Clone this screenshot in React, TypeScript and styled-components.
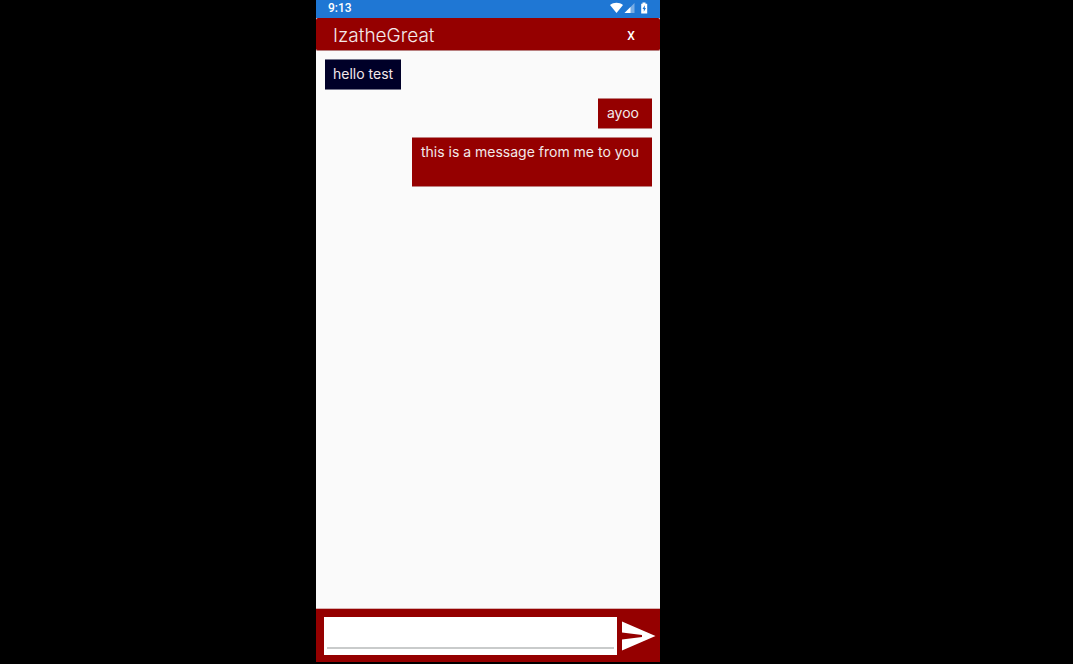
import React from "react";
import styled, { createGlobalStyle } from "styled-components";

const GlobalStyle = createGlobalStyle`
  * { box-sizing: border-box; }
  body { margin: 0; background: #000; }
  button, input { font: inherit; border: 0; padding: 0; margin: 0; border-radius: 0; }
`;

const Stage = styled.div`
  display: grid;
  grid-template-columns: minmax(0, 316fr) minmax(320px, 344fr) minmax(0, 413fr);
  min-height: 100vh;
  padding-bottom: 2px;
  background: #000;
`;

const Phone = styled.main`
  grid-column: 2;
  display: flex;
  flex-direction: column;
  background: #fafafa;
  color: #f3e9ea;
  font-family: Inter, "Open Sans", sans-serif;
  font-weight: 300;
`;

const StatusBar = styled.div`
  display: flex;
  align-items: center;
  justify-content: space-between;
  height: 18px;
  padding: 0 12px 2px 12px;
  background: #1f77d4;
  color: #fff;
  font: 500 12px/16px Roboto, sans-serif;
`;

const StatusIcons = styled.svg`
  display: block;
  width: 38px;
  height: 12px;
`;

const Header = styled.header`
  display: flex;
  align-items: center;
  justify-content: space-between;
  height: 33px;
  padding: 3px 18px 0 17px;
  background: #950000;
  border-bottom: 1px solid #b98080;
  border-radius: 2px;
`;

const Title = styled.h1`
  margin: 0;
  font-size: 19px;
  line-height: 24px;
  font-weight: 300;
`;

const CloseButton = styled.button`
  width: 22px;
  height: 24px;
  background: none;
  color: #fff;
  && { font: 500 12px/24px Roboto, sans-serif; }
`;

const Messages = styled.section`
  flex: 1;
  display: flex;
  flex-direction: column;
  align-items: flex-start;
  gap: 8px;
  padding: 8px 8px 8px 9px;
`;

const Bubble = styled.p<{ $mine?: boolean; $tall?: boolean }>`
  align-self: ${(p) => (p.$mine ? "flex-end" : "flex-start")};
  margin: 0;
  min-height: ${(p) => (p.$tall ? 50 : 31)}px;
  padding: 5px ${(p) => (p.$mine ? 13 : 8)}px 5px ${(p) => (p.$mine ? 9 : 8)}px;
  border: 1px solid ${(p) => (p.$mine ? "#c08080" : "#77778c")};
  border-width: 1px 0;
  background: ${(p) => (p.$mine ? "#950000" : "#000028")};
  font-size: 14px;
  line-height: 18px;
  font-weight: 400;
`;

const Composer = styled.form`
  display: flex;
  align-items: center;
  gap: 4px;
  height: 54px;
  padding: 0 4px 0 8px;
  background: #950000;
  border-top: 1px solid #d8b0b0;
`;

const Field = styled.label`
  flex: 1;
  display: flex;
  min-width: 0;
  height: 38px;
  padding: 0 3px 6px;
  background: #fff;
`;

const MessageInput = styled.input`
  width: 100%;
  && { border-bottom: 2px solid #c9cbcb; }
  background: #fff;
  color: #222;
  outline: none;
`;

const SendButton = styled.button`
  display: flex;
  background: none;
`;

export default function App() {
  return (
    <>
      <GlobalStyle />
      <Stage>
        <Phone>
          <StatusBar>
            <span>9:13</span>
            <StatusIcons viewBox="0 0 38 12" fill="#fff" aria-hidden="true">
              <path d="M0 3C3.600 -.1 9.400 -.1 13 3L6.500 11.100Z" />
              <path d="M24.500 1V11H14.500Z" opacity=".4" />
              <path d="M20.500 5V11H14.500Z" />
              <path d="M32.500 .5h3v1.200h1.700V11.500h-6V1.700h1.300Z" />
              <path d="M34.800 3.300L32.500 7.100h1.300v2.600L36 6h-1.200Z" fill="#1f77d4" />
            </StatusIcons>
          </StatusBar>
          <Header>
            <Title>IzatheGreat</Title>
            <CloseButton type="button" aria-label="Close chat">X</CloseButton>
          </Header>
          <Messages>
            <Bubble>hello test</Bubble>
            <Bubble $mine>ayoo</Bubble>
            <Bubble $mine $tall>this is a message from me to you</Bubble>
          </Messages>
          <Composer onSubmit={(e) => e.preventDefault()}>
            <Field>
              <MessageInput type="text" aria-label="Message" />
            </Field>
            <SendButton type="submit" aria-label="Send">
              <svg width="35" height="30" viewBox="0 0 35 30" fill="#fff" aria-hidden="true">
                <path d="M1 0.500L34.500 15L1 29.500V18.500L21 16V14L1 11.500Z" />
              </svg>
            </SendButton>
          </Composer>
        </Phone>
      </Stage>
    </>
  );
}
